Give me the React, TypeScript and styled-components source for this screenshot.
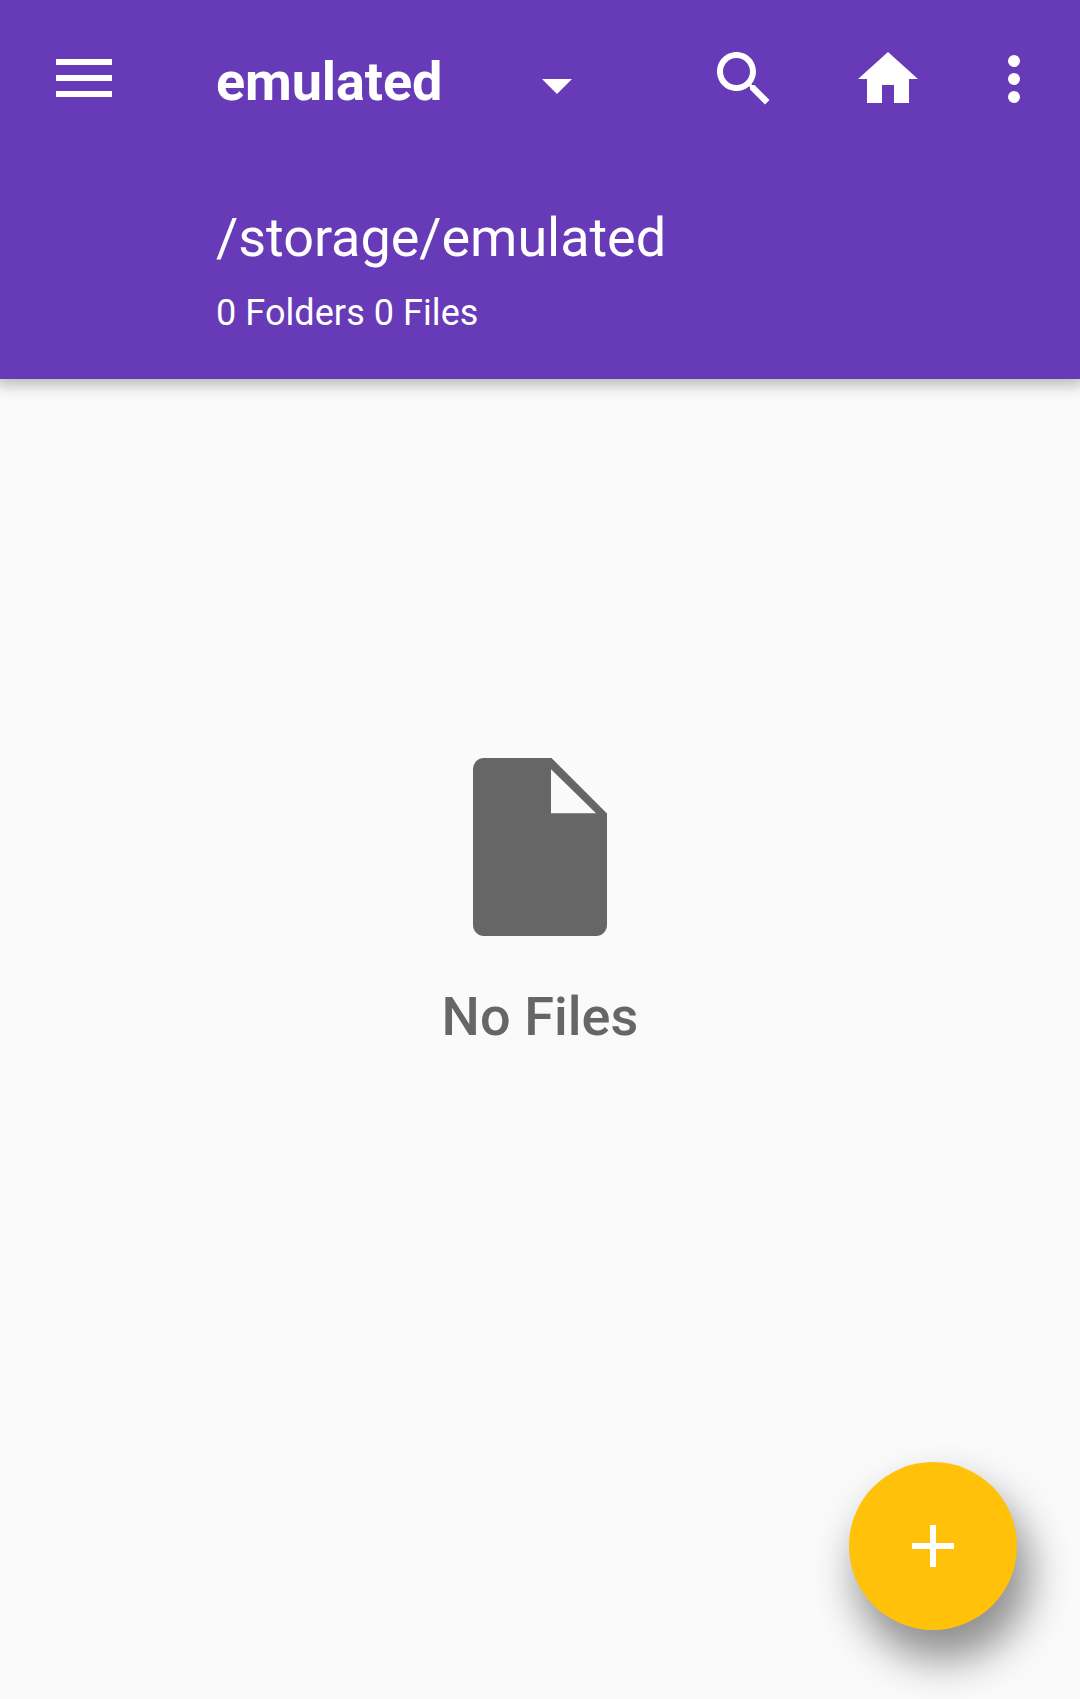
import React from "react";
import styled, { createGlobalStyle } from "styled-components";

const GlobalStyle = createGlobalStyle`
  *, *::before, *::after { box-sizing: border-box; }
  body { margin: 0; background: #fafafa; overflow: hidden; }
`;

const Screen = styled.div`
  display: flex;
  flex-direction: column;
  height: 1699px;
  width: 1080px;
  position: relative;
  background: #fafafa;
  font-family: Roboto, "Noto Sans", sans-serif;
`;

const Header = styled.header`
  height: 379px;
  background: #673ab7;
  color: #fff;
  box-shadow: 0 1px 15px 4px rgba(0, 0, 0, 0.29);
`;

const Toolbar = styled.div`
  display: flex;
  align-items: center;
  height: 158px;
  padding: 0 30px 0 56px;
`;

const IconButton = styled.button<{ $gap?: number }>`
  display: flex;
  padding: 0;
  border: 0;
  background: none;
  color: inherit;
  margin-left: ${({ $gap = 0 }) => $gap}px;
  svg { display: block; fill: currentColor; }
`;

const MenuButton = styled(IconButton)`
  padding-bottom: 2px;
`;

const PathPicker = styled.div`
  display: flex;
  align-items: center;
  justify-content: space-between;
  width: 356px;
  margin-left: 104px;
  padding-top: 6px;
  svg { display: block; fill: currentColor; margin-top: 9px; }
`;

const Title = styled.h1`
  margin: 0;
  font-size: 54px;
  font-weight: 700;
  line-height: 64px;
  letter-spacing: -0.12px;
`;

const Actions = styled.nav`
  display: flex;
  margin-left: auto;
`;

const Location = styled.div`
  padding: 48px 0 0 216px;
`;

const Path = styled.div`
  font-size: 54px;
  line-height: 64px;
  letter-spacing: -0.05px;
`;

const Counts = styled.div`
  margin-top: 22px;
  font-size: 36px;
  line-height: 42px;
  letter-spacing: 0.07px;
`;

const Empty = styled.main`
  flex: 1;
  display: flex;
  flex-direction: column;
  align-items: center;
  padding-top: 379px;
  color: #666;
  svg { display: block; fill: currentColor; }
`;

const EmptyLabel = styled.div`
  margin-top: 49px;
  font-size: 54px;
  font-weight: 500;
  line-height: 64px;
  letter-spacing: 0.06px;
`;

const Fab = styled.button`
  position: absolute;
  right: 63px;
  bottom: 69px;
  width: 168px;
  height: 168px;
  display: flex;
  align-items: center;
  justify-content: center;
  padding: 0;
  border: 0;
  border-radius: 50%;
  background: #ffc10a;
  box-shadow: 10px 27px 42px 3px rgba(0, 0, 0, 0.43);
  svg { display: block; fill: #fff; }
`;

const ICONS = {
  search:
    "M15.5 14h-.79l-.28-.27C15.41 12.59 16 11.11 16 9.5 16 5.91 13.09 3 9.5 3S3 5.91 3 9.5 5.91 16 9.5 16c1.61 0 3.09-.59 4.23-1.57l.27.28v.79l5 4.99L20.49 19l-4.99-5zm-6 0C7.01 14 5 11.99 5 9.5S7.01 5 9.5 5 14 7.01 14 9.5 11.99 14 9.5 14z",
  home: "M10 20v-6h4v6h5v-8h3L12 3 2 12h3v8z",
  more: "M12 8a2 2 0 1 0 0-4 2 2 0 0 0 0 4zm0 2a2 2 0 1 0 0 4 2 2 0 0 0 0-4zm0 6a2 2 0 1 0 0 4 2 2 0 0 0 0-4z",
};

function Action({ icon, label, gap }: { icon: keyof typeof ICONS; label: string; gap?: number }) {
  return (
    <IconButton aria-label={label} $gap={gap}>
      <svg width="72" height="72" viewBox="0 0 24 24">
        <path d={ICONS[icon]} />
      </svg>
    </IconButton>
  );
}

export default function App() {
  return (
    <>
      <GlobalStyle />
      <Screen>
        <Header>
          <Toolbar>
            <MenuButton aria-label="Menu">
              <svg width="56" height="38" viewBox="0 0 56 38" shapeRendering="crispEdges">
                <path d="M0 0h56v6H0zM0 16h56v6H0zM0 32h56v6H0z" />
              </svg>
            </MenuButton>
            <PathPicker>
              <Title>emulated</Title>
              <svg width="30" height="15" viewBox="0 0 30 15">
                <path d="M0 0h30L15 15z" />
              </svg>
            </PathPicker>
            <Actions>
              <Action icon="search" label="Search" />
              <Action icon="home" label="Home" gap={72} />
              <Action icon="more" label="More options" gap={54} />
            </Actions>
          </Toolbar>
          <Location>
            <Path>/storage/emulated</Path>
            <Counts>0 Folders 0 Files</Counts>
          </Location>
        </Header>
        <Empty>
          <svg width="134" height="178" viewBox="0 0 134 178">
            <path
              fillRule="evenodd"
              d="M11 0H78.500L134 55.500V167a11 11 0 0 1-11 11H11a11 11 0 0 1-11-11V11A11 11 0 0 1 11 0zM78 11.300V55.300H123z"
            />
          </svg>
          <EmptyLabel>No Files</EmptyLabel>
        </Empty>
        <Fab aria-label="Add">
          <svg width="42" height="42" viewBox="0 0 42 42">
            <path d="M18 0h6v18h18v6H24v18h-6V24H0v-6h18z" />
          </svg>
        </Fab>
      </Screen>
    </>
  );
}
